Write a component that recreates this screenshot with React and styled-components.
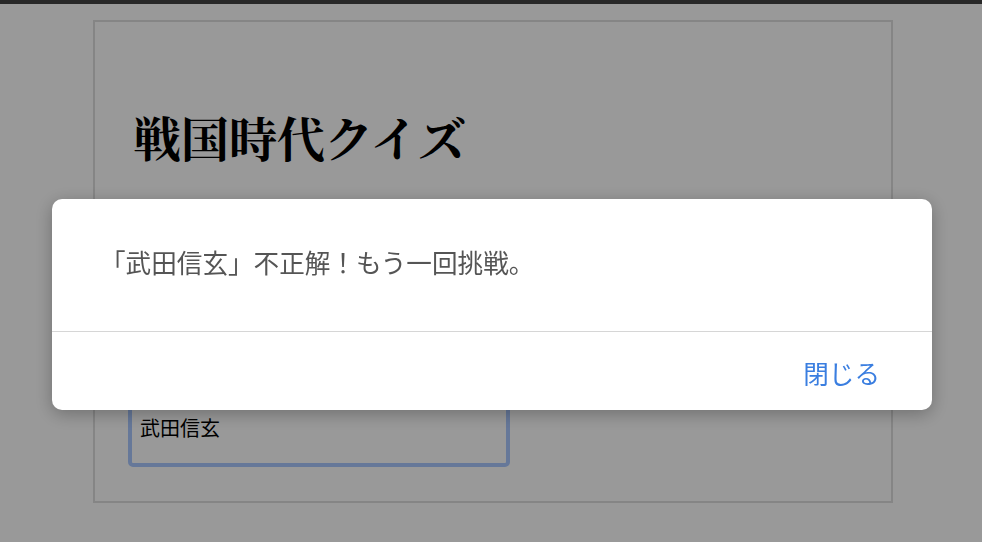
import React from "react";
import styled, { createGlobalStyle } from "styled-components";

const GlobalStyle = createGlobalStyle`
  html, body {
    margin: 0;
    padding: 0;
    background: #fff;
    font-family: "Noto Sans CJK JP", "Noto Sans", sans-serif;
  }
  * {
    box-sizing: border-box;
  }
`;

const TopBar = styled.div`
  height: 4px;
  background: #444;
`;

const Card = styled.main`
  width: 800px;
  margin: 16px 0 0 93px;
  padding: 40px 33px 34px;
  border: 2px solid #dedede;
`;

const Title = styled.h1`
  margin: 40px 0 0 5px;
  font-family: "Noto Serif CJK JP", "Noto Sans CJK JP", serif;
  font-size: 48px;
  font-weight: 700;
  line-height: 69px;
  color: #000;
`;

const Answer = styled.textarea`
  display: block;
  width: 382px;
  height: 64px;
  margin-top: 232px;
  padding: 6px 8px 8px;
  border: 4px solid rgb(170, 200, 255);
  border-radius: 5px;
  font-family: "Noto Sans CJK JP", sans-serif;
  font-size: 20px;
  line-height: 29px;
  color: #000;
  resize: none;
  outline: none;
`;

const Backdrop = styled.div`
  position: fixed;
  inset: 0;
  background: rgba(0, 0, 0, 0.4);
  display: flex;
  justify-content: center;
  align-items: flex-start;
  padding: 199px 0 0 2px;
`;

const Dialog = styled.div`
  width: 880px;
  background: #fff;
  border-radius: 10px;
  box-shadow: 0 4px 18px rgba(0, 0, 0, 0.28);
  overflow: hidden;
`;

const Message = styled.p`
  margin: 0;
  padding: 44px 48px 51px;
  font-size: 25.6px;
  line-height: 37px;
  color: #555;
  border-bottom: 1px solid #d6d6d6;
`;

const Footer = styled.div`
  display: flex;
  justify-content: flex-end;
  padding: 22px 52px 19px;
`;

const CloseButton = styled.button`
  border: none;
  background: none;
  padding: 0;
  font-family: "Noto Sans CJK JP", sans-serif;
  font-size: 25.6px;
  line-height: 37px;
  color: #3a7ee0;
  cursor: pointer;
`;

const App = () => {
  return (
    <>
      <GlobalStyle />
      <TopBar />
      <Card>
        <Title>戦国時代クイズ</Title>
        <Answer readOnly value="武田信玄" />
      </Card>
      <Backdrop>
        <Dialog>
          <Message>「武田信玄」不正解！もう一回挑戦。</Message>
          <Footer>
            <CloseButton>閉じる</CloseButton>
          </Footer>
        </Dialog>
      </Backdrop>
    </>
  );
};

export default App;
